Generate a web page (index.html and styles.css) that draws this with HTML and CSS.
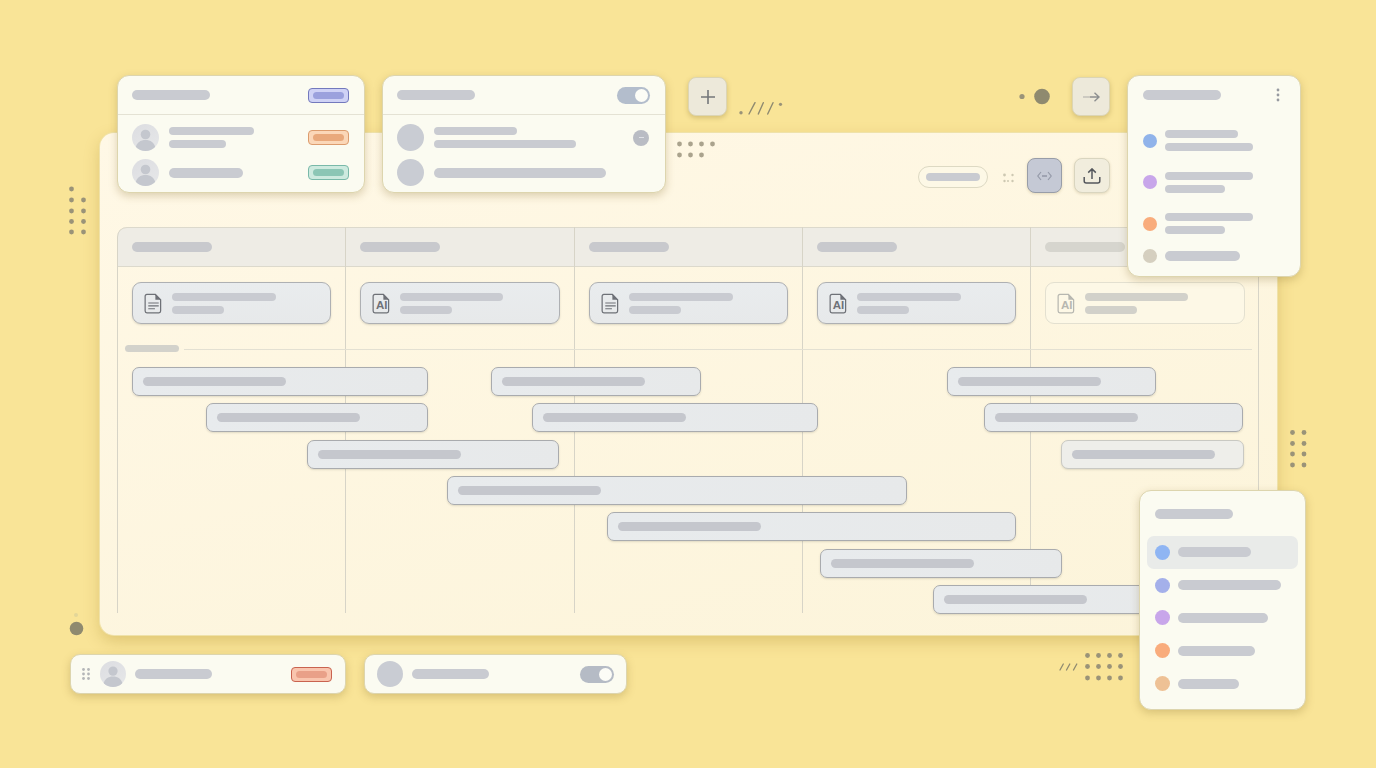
FILE: index.html
```html
<!DOCTYPE html>
<html lang="en">
<head>
    <meta charset="UTF-8">
    <meta name="viewport" content="width=device-width, initial-scale=1.0">
    <title>Schedule board</title>
    <link rel="stylesheet" href="styles.css">
</head>
<body>
    <svg width="0" height="0" class="defs">
        <symbol id="person" viewBox="0 0 27 27">
            <circle cx="13.5" cy="10.5" r="4.8" fill="#c4c7ce"/>
            <path d="M3.5 24c1.2-5.6 5-8 10-8s8.800 2.400 10 8a13.500 13.500 0 0 1-20 0z" fill="#c4c7ce"/>
        </symbol>
        <symbol id="doc" viewBox="0 0 20 22">
            <path d="M3 1.500h9l5.500 5.500v12a1.800 1.800 0 0 1-1.800 1.800H3a1.800 1.800 0 0 1-1.800-1.800V3.300A1.800 1.800 0 0 1 3 1.500z" fill="none" stroke="currentColor" stroke-width="1.300"/>
            <path d="M12 1.500v5.500h5.500z" fill="currentColor"/>
            <path d="M4.500 10.500h11M4.500 13.500h11M4.500 16.500h7" fill="none" stroke="currentColor" stroke-width="1.200"/>
        </symbol>
        <symbol id="doc-blank" viewBox="0 0 20 22">
            <path d="M3 1.500h9l5.500 5.500v12a1.800 1.800 0 0 1-1.800 1.800H3a1.800 1.800 0 0 1-1.800-1.800V3.300A1.800 1.800 0 0 1 3 1.500z" fill="none" stroke="currentColor" stroke-width="1.300"/>
            <path d="M12 1.500v5.500h5.500z" fill="currentColor"/>
        </symbol>
    </svg>

    <div class="stage">
        <!-- main board -->
        <div class="board">
            <div class="toolbar">
                <div class="pill"><span class="bar" style="width:54px"></span></div>
                <svg class="tool-dots" width="11" height="10" viewBox="0 0 11 10">
                    <circle cx="1.500" cy="2" r="1.400"/><circle cx="9.500" cy="2" r="1.200"/>
                    <circle cx="1.500" cy="8" r="1.200"/><circle cx="5" cy="8" r="1"/><circle cx="9.500" cy="8" r="1.200"/>
                </svg>
                <button class="tool-btn tool-btn-active">
                    <svg width="15" height="10" viewBox="0 0 15 10" fill="none" stroke="#959aa9" stroke-width="1.200">
                        <path d="M4 1 .8 5 4 9M11 1l3.200 4L11 9"/>
                        <path d="M5 5h5" stroke-width="1.600"/>
                    </svg>
                </button>
                <button class="tool-btn">
                    <svg width="18" height="16" viewBox="0 0 18 16" fill="none" stroke="#54575c" stroke-width="1.500">
                        <path d="M9 11V1M5.200 4.600 9 .9l3.800 3.700"/>
                        <path d="M1.200 9v4a2 2 0 0 0 2 2h11.600a2 2 0 0 0 2-2V9"/>
                    </svg>
                </button>
            </div>

            <div class="table">
                <div class="thead">
                    <div class="th"><span class="bar bar-head"></span></div>
                    <div class="th"><span class="bar bar-head"></span></div>
                    <div class="th"><span class="bar bar-head"></span></div>
                    <div class="th"><span class="bar bar-head"></span></div>
                    <div class="th"><span class="bar bar-head bar-faint"></span></div>
                </div>
                <div class="col-lines"><i></i><i></i><i></i><i></i><i></i></div>

                <div class="docs">
                    <div class="doc">
                        <span class="doc-icon"><svg width="19" height="21"><use href="#doc"/></svg></span>
                        <div class="stack"><span class="bar" style="width:104px"></span><span class="bar" style="width:52px"></span></div>
                    </div>
                    <div class="doc">
                        <span class="doc-icon"><svg width="19" height="21"><use href="#doc-blank"/></svg><b>AI</b></span>
                        <div class="stack"><span class="bar" style="width:103px"></span><span class="bar" style="width:52px"></span></div>
                    </div>
                    <div class="doc">
                        <span class="doc-icon"><svg width="19" height="21"><use href="#doc"/></svg></span>
                        <div class="stack"><span class="bar" style="width:104px"></span><span class="bar" style="width:52px"></span></div>
                    </div>
                    <div class="doc">
                        <span class="doc-icon"><svg width="19" height="21"><use href="#doc-blank"/></svg><b>AI</b></span>
                        <div class="stack"><span class="bar" style="width:104px"></span><span class="bar" style="width:52px"></span></div>
                    </div>
                    <div class="doc doc-faint">
                        <span class="doc-icon"><svg width="19" height="21"><use href="#doc-blank"/></svg><b>AI</b></span>
                        <div class="stack"><span class="bar" style="width:103px"></span><span class="bar" style="width:52px"></span></div>
                    </div>
                </div>

                <div class="divider"><span class="divider-label"></span><span class="divider-line"></span></div>

                <div class="gantt">
                    <div class="gantt-row">
                        <div class="task" style="margin-left:15px;width:296px"><span class="bar bar-task"></span></div>
                        <div class="task" style="margin-left:63px;width:210px"><span class="bar bar-task"></span></div>
                        <div class="task" style="margin-left:246px;width:209px"><span class="bar bar-task"></span></div>
                    </div>
                    <div class="gantt-row">
                        <div class="task" style="margin-left:89px;width:222px"><span class="bar bar-task"></span></div>
                        <div class="task" style="margin-left:104px;width:286px"><span class="bar bar-task"></span></div>
                        <div class="task" style="margin-left:166px;width:259px"><span class="bar bar-task"></span></div>
                    </div>
                    <div class="gantt-row">
                        <div class="task" style="margin-left:190px;width:252px"><span class="bar bar-task"></span></div>
                        <div class="task task-faint" style="margin-left:502px;width:183px"><span class="bar bar-task"></span></div>
                    </div>
                    <div class="gantt-row">
                        <div class="task" style="margin-left:330px;width:460px"><span class="bar bar-task"></span></div>
                    </div>
                    <div class="gantt-row">
                        <div class="task" style="margin-left:490px;width:409px"><span class="bar bar-task"></span></div>
                    </div>
                    <div class="gantt-row">
                        <div class="task" style="margin-left:703px;width:242px"><span class="bar bar-task"></span></div>
                    </div>
                    <div class="gantt-row">
                        <div class="task" style="margin-left:816px;width:280px"><span class="bar bar-task"></span></div>
                    </div>
                </div>
            </div>
        </div>

        <!-- scattered dots and dashes -->
        <svg class="decor" width="1376" height="768" viewBox="0 0 1376 768">
            <g fill="#9a9378">
                <circle cx="71.500" cy="189" r="2.400"/>
                <circle cx="71.500" cy="200" r="2.400"/><circle cx="83.500" cy="200" r="2.400"/>
                <circle cx="71.500" cy="211" r="2.400"/><circle cx="83.500" cy="211" r="2.400"/>
                <circle cx="71.500" cy="221.500" r="2.400"/><circle cx="83.500" cy="221.500" r="2.400"/>
                <circle cx="71.500" cy="232" r="2.400"/><circle cx="83.500" cy="232" r="2.400"/>

                <circle cx="1292.500" cy="432.500" r="2.400"/><circle cx="1304" cy="432.500" r="2.400"/>
                <circle cx="1292.500" cy="443.500" r="2.400"/><circle cx="1304" cy="443.500" r="2.400"/>
                <circle cx="1292.500" cy="454" r="2.400"/><circle cx="1304" cy="454" r="2.400"/>
                <circle cx="1292.500" cy="465" r="2.400"/><circle cx="1304" cy="465" r="2.400"/>

                <circle cx="1087.500" cy="655.500" r="2.400"/><circle cx="1098.500" cy="655.500" r="2.400"/><circle cx="1109.500" cy="655.500" r="2.400"/><circle cx="1120.500" cy="655.500" r="2.400"/>
                <circle cx="1087.500" cy="666.500" r="2.400"/><circle cx="1098.500" cy="666.500" r="2.400"/><circle cx="1109.500" cy="666.500" r="2.400"/><circle cx="1120.500" cy="666.500" r="2.400"/>
                <circle cx="1087.500" cy="678" r="2.400"/><circle cx="1098.500" cy="678" r="2.400"/><circle cx="1109.500" cy="678" r="2.400"/><circle cx="1120.500" cy="678" r="2.400"/>

                <circle cx="741" cy="112.800" r="1.700"/>
                <circle cx="780.500" cy="104.300" r="1.600"/>
                <circle cx="1022" cy="96.500" r="2.600"/>
            </g>
            <g fill="#aaa38d">
                <circle cx="679.500" cy="144" r="2.400"/><circle cx="690.500" cy="144" r="2.400"/><circle cx="701.500" cy="144" r="2.400"/><circle cx="712.500" cy="144" r="2.400"/>
                <circle cx="679.500" cy="155" r="2.400"/><circle cx="690.500" cy="155" r="2.400"/><circle cx="701.500" cy="155" r="2.400"/>
            </g>
            <circle cx="1042" cy="96.500" r="7.800" fill="#8f8a6f"/>
            <circle cx="76.500" cy="628.500" r="6.800" fill="#8f8a6f"/>
            <circle cx="76" cy="615" r="2" fill="#e3d699"/>
            <path d="M749 114l6-11.300M758.300 114l5-11.300M767.700 114l5.300-11.300" fill="none" stroke="#8f8a70" stroke-width="1.400" stroke-linecap="round"/>
            <path d="M1060 670l3.300-6M1066.500 670l3.300-6M1073.500 670l3.300-6" fill="none" stroke="#8f8a70" stroke-width="1.300" stroke-linecap="round"/>
        </svg>

        <!-- floating cards, top row -->
        <div class="card card-people">
            <div class="card-head">
                <span class="bar bar-title"></span>
                <span class="tag tag-purple"><i></i></span>
            </div>
            <div class="card-body">
                <div class="person">
                    <div class="avatar"><svg width="27" height="27"><use href="#person"/></svg></div>
                    <div class="stack"><span class="bar" style="width:85px"></span><span class="bar" style="width:57px"></span></div>
                    <span class="tag tag-orange"><i></i></span>
                </div>
                <div class="person">
                    <div class="avatar"><svg width="27" height="27"><use href="#person"/></svg></div>
                    <span class="bar bar-lg" style="width:74px"></span>
                    <span class="tag tag-teal"><i></i></span>
                </div>
            </div>
        </div>

        <div class="card card-toggle">
            <div class="card-head">
                <span class="bar bar-title"></span>
                <span class="toggle"><i></i></span>
            </div>
            <div class="card-body">
                <div class="person">
                    <div class="avatar avatar-plain"></div>
                    <div class="stack"><span class="bar" style="width:83px"></span><span class="bar" style="width:142px"></span></div>
                    <span class="mini-badge"><i></i></span>
                </div>
                <div class="person">
                    <div class="avatar avatar-plain"></div>
                    <span class="bar bar-lg" style="width:172px"></span>
                </div>
            </div>
        </div>

        <button class="float-btn btn-plus">
            <svg width="14" height="14" viewBox="0 0 14 14" fill="none" stroke="#74777a" stroke-width="1.600"><path d="M7 0v14M0 7h14"/></svg>
        </button>
        <button class="float-btn btn-arrow">
            <svg width="18" height="10" viewBox="0 0 18 10" fill="none" stroke="#8d8f90" stroke-width="1.400">
                <path d="M8 5h9M12.500.7 17 5l-4.500 4.300"/>
                <path d="M1 5h7" stroke="#bfbeb6"/>
            </svg>
        </button>

        <div class="card card-legend">
            <div class="legend-head">
                <span class="bar bar-title"></span>
                <svg width="4" height="14" viewBox="0 0 4 14" fill="#979aa1"><circle cx="2" cy="2" r="1.400"/><circle cx="2" cy="7" r="1.400"/><circle cx="2" cy="12" r="1.400"/></svg>
            </div>
            <div class="legend-list">
                <div class="legend-row">
                    <span class="dot dot-blue"></span>
                    <div class="stack"><span class="bar" style="width:73px"></span><span class="bar" style="width:88px"></span></div>
                </div>
                <div class="legend-row">
                    <span class="dot dot-purple"></span>
                    <div class="stack"><span class="bar" style="width:88px"></span><span class="bar" style="width:60px"></span></div>
                </div>
                <div class="legend-row">
                    <span class="dot dot-orange"></span>
                    <div class="stack"><span class="bar" style="width:88px"></span><span class="bar" style="width:60px"></span></div>
                </div>
                <div class="legend-row legend-row-single">
                    <span class="dot dot-beige"></span>
                    <span class="bar bar-lg" style="width:75px"></span>
                </div>
            </div>
        </div>

        <!-- bottom right menu -->
        <div class="card card-menu">
            <div class="menu-head"><span class="bar bar-title"></span></div>
            <div class="menu-list">
                <div class="menu-row menu-row-active"><span class="dot dot-blue2"></span><span class="bar bar-lg" style="width:73px"></span></div>
                <div class="menu-row"><span class="dot dot-periwinkle"></span><span class="bar bar-lg" style="width:103px"></span></div>
                <div class="menu-row"><span class="dot dot-purple"></span><span class="bar bar-lg" style="width:90px"></span></div>
                <div class="menu-row"><span class="dot dot-orange"></span><span class="bar bar-lg" style="width:77px"></span></div>
                <div class="menu-row"><span class="dot dot-sand"></span><span class="bar bar-lg" style="width:61px"></span></div>
            </div>
        </div>

        <!-- bottom row -->
        <div class="card card-strip strip-left">
            <svg class="grip" width="8" height="12" viewBox="0 0 8 12" fill="#b4b6b8">
                <circle cx="1.500" cy="1.500" r="1.400"/><circle cx="6.500" cy="1.500" r="1.400"/>
                <circle cx="1.500" cy="6" r="1.400"/><circle cx="6.500" cy="6" r="1.400"/>
                <circle cx="1.500" cy="10.500" r="1.400"/><circle cx="6.500" cy="10.500" r="1.400"/>
            </svg>
            <div class="avatar avatar-sm"><svg width="26" height="26"><use href="#person"/></svg></div>
            <span class="bar bar-lg" style="width:77px"></span>
            <span class="tag tag-red"><i></i></span>
        </div>
        <div class="card card-strip strip-right">
            <div class="avatar avatar-sm avatar-plain"></div>
            <span class="bar bar-lg" style="width:77px"></span>
            <span class="toggle toggle-strip"><i></i></span>
        </div>
    </div>
</body>
</html>
```

FILE: styles.css
```css
* {
    box-sizing: border-box;
}
body {
    margin: 0;
    padding: 0;
    font-family: "Liberation Sans", Arial, sans-serif;
    background: #f9e598;
    overflow: hidden;
}
button {
    padding: 0;
    font: inherit;
}
.defs {
    position: absolute;
}
.stage {
    position: relative;
    width: 1376px;
    height: 768px;
    overflow: hidden;
    background: #f9e497;
}
.decor {
    position: absolute;
    top: 0;
    left: 0;
    pointer-events: none;
}

/* skeleton text */
.bar {
    display: block;
    flex-shrink: 0;
    height: 8px;
    border-radius: 4px;
    background: #c9cbd1;
}
.bar-lg {
    height: 10px;
    border-radius: 5px;
}
.bar-title {
    width: 78px;
    height: 10px;
    border-radius: 5px;
}
.bar-head {
    width: 80px;
    height: 10px;
    border-radius: 5px;
    background: #c8c9cd;
}
.bar-faint {
    background: #d6d5ce;
}
.bar-task {
    width: 143px;
    height: 9px;
    border-radius: 4.500px;
    background: #c5c7cd;
}
.stack {
    display: flex;
    flex-direction: column;
    gap: 5px;
}

/* board */
.board {
    position: absolute;
    left: 100px;
    top: 133px;
    width: 1177px;
    height: 502px;
    padding: 0 18.500px 0 17px;
    border-radius: 14px;
    background: linear-gradient(165deg, #fff8e6, #fcf4da);
    box-shadow: 0 0 0 1px #efe2aa, 0 6px 16px rgba(165, 130, 40, 0.32);
}
.toolbar {
    display: flex;
    justify-content: flex-end;
    align-items: flex-start;
    height: 94px;
    padding: 25px 148.500px 0 0;
}
.pill {
    display: flex;
    align-items: center;
    justify-content: center;
    width: 70px;
    height: 22px;
    margin-top: 8px;
    margin-right: 15px;
    border: 1px solid #ddd9c3;
    border-radius: 11px;
    background: #fdf8e6;
}
.tool-dots {
    margin-top: 15px;
    margin-right: 13px;
    fill: #cdc8b2;
}
.tool-btn {
    display: flex;
    align-items: center;
    justify-content: center;
    width: 36px;
    height: 35px;
    margin-left: 12px;
    border: 1px solid #d9d5bf;
    border-radius: 8px;
    background: #f1eddd;
    box-shadow: 0 1px 3px rgba(120, 100, 40, 0.2);
}
.tool-btn-active {
    width: 35px;
    margin-left: 0;
    border-color: #989da8;
    background: #c5c9d5;
}

/* table */
.table {
    position: relative;
}
.thead {
    display: grid;
    grid-template-columns: repeat(5, 1fr);
    height: 40px;
    border-top: 1px solid #dcd9cc;
    border-bottom: 1px solid #dcd9cc;
    border-radius: 10px 10px 0 0;
    background: #eeece5;
}
.th {
    display: flex;
    align-items: center;
    padding-left: 15px;
}
.col-lines {
    position: absolute;
    top: 0;
    left: 0;
    right: 0;
    bottom: 1px;
    display: grid;
    grid-template-columns: repeat(5, 1fr);
}
.col-lines i {
    border-left: 1px solid #d7d4c7;
}
.col-lines i:first-child {
    border-top-left-radius: 10px;
}
.col-lines i:last-child {
    border-right: 1px solid #d7d4c7;
}
.docs {
    position: relative;
    display: grid;
    grid-template-columns: repeat(5, 1fr);
    padding-top: 15px;
}
.doc {
    display: flex;
    align-items: center;
    gap: 9px;
    height: 42px;
    margin: 0 14px 0 15px;
    padding-left: 11px;
    border: 1px solid #aeb0b3;
    border-radius: 9px;
    background: linear-gradient(#e9ecee, #e7e9ea);
    box-shadow: 0 1px 2px rgba(90, 90, 70, 0.2);
    color: #6e7177;
}
.doc-icon {
    position: relative;
    display: block;
    width: 19px;
    height: 21px;
    flex-shrink: 0;
}
.doc-icon svg {
    display: block;
}
.doc-icon b {
    position: absolute;
    top: 7px;
    left: 0;
    right: 0;
    font-size: 11.500px;
    line-height: 11.500px;
    text-align: center;
}
.doc-faint {
    border-color: #e3e0d0;
    background: #fdf8e6;
    box-shadow: none;
    color: #b7b7b0;
}
.doc-faint .bar {
    background: #d2d1ca;
}
.divider {
    position: relative;
    display: flex;
    align-items: center;
    gap: 5px;
    height: 7px;
    margin-top: 21px;
    padding: 0 7px 0 8px;
}
.divider-label {
    flex-shrink: 0;
    width: 54px;
    height: 7px;
    border-radius: 3.500px;
    background: #d3d2cb;
}
.divider-line {
    flex: 1;
    height: 1px;
    margin-top: 1px;
    background: #e3e0d2;
}
.gantt {
    position: relative;
    display: flex;
    flex-direction: column;
    gap: 7.330px;
    margin-top: 15px;
}
.gantt-row {
    display: flex;
    height: 29px;
}
.task {
    display: flex;
    align-items: center;
    flex-shrink: 0;
    padding-left: 10px;
    border: 1px solid #a9abae;
    border-radius: 7px;
    background: linear-gradient(100deg, #e8ebed, #e7e9ea);
    box-shadow: 0 1px 2px rgba(90, 90, 70, 0.18);
}
.task-faint {
    border-color: #c9c9c3;
    background: #eeeeea;
}

/* floating cards */
.card {
    position: absolute;
    border: 1px solid #ddd5ae;
    border-radius: 12px;
    background: #fbfbf1;
    box-shadow: 0 3px 9px rgba(130, 105, 40, 0.28);
}
.card-people {
    left: 117px;
    top: 75px;
    width: 248px;
    height: 118px;
}
.card-toggle {
    left: 382px;
    top: 75px;
    width: 284px;
    height: 118px;
}
.card-head {
    display: flex;
    align-items: center;
    justify-content: space-between;
    height: 39px;
    padding: 0 15px 0 14px;
    border-bottom: 1px solid #e4e2d4;
}
.card-body {
    display: flex;
    flex-direction: column;
    gap: 8px;
    padding: 9px 15px 0 14px;
}
.person {
    display: flex;
    align-items: center;
    gap: 10px;
    height: 27px;
}
.person .tag,
.person .mini-badge {
    margin-left: auto;
}
.avatar {
    flex-shrink: 0;
    width: 27px;
    height: 27px;
    border-radius: 50%;
    overflow: hidden;
    background: linear-gradient(150deg, #dcdde1, #e7e8e9);
}
.avatar svg {
    display: block;
}
.avatar-plain {
    background: #c9ccd3;
}
.avatar-sm {
    width: 26px;
    height: 26px;
}
.tag {
    display: flex;
    align-items: center;
    justify-content: center;
    flex-shrink: 0;
    width: 41px;
    height: 15px;
    border: 1px solid;
    border-radius: 4px;
}
.tag i {
    width: 31px;
    height: 7px;
    border-radius: 3.500px;
}
.tag-purple {
    border-color: #7379bd;
    background: #cfd2f5;
}
.tag-purple i {
    background: #9ba1dd;
}
.tag-orange {
    border-color: #dc9c6e;
    background: #fbd7b8;
}
.tag-orange i {
    background: #e9a97c;
}
.tag-teal {
    border-color: #79b9a9;
    background: #cdeadf;
}
.tag-teal i {
    background: #8bc6b5;
}
.tag-red {
    margin-left: auto;
    border-color: #c9634f;
    background: #f9c5ae;
}
.tag-red i {
    background: #e9a088;
}
.toggle {
    display: flex;
    justify-content: flex-end;
    align-items: center;
    width: 33px;
    height: 17px;
    padding: 0 2px;
    border-radius: 8.500px;
    background: #b3bdcc;
}
.toggle i {
    width: 13px;
    height: 13px;
    border-radius: 50%;
    background: #fcfcf6;
}
.toggle-strip {
    width: 34px;
    margin-left: auto;
    background: #b5bbc5;
}
.mini-badge {
    display: flex;
    align-items: center;
    justify-content: center;
    width: 16px;
    height: 16px;
    margin-right: 1px;
    border-radius: 50%;
    background: #b9bcc4;
}
.mini-badge i {
    width: 5px;
    height: 1.500px;
    background: #dfe1e6;
}
.float-btn {
    position: absolute;
    top: 77px;
    display: flex;
    align-items: center;
    justify-content: center;
    width: 39px;
    height: 39px;
    border: 1px solid #dcd5b4;
    border-radius: 8px;
    background: #ede9da;
    box-shadow: 0 2px 5px rgba(130, 105, 40, 0.3);
}
.btn-plus {
    left: 688px;
}
.btn-arrow {
    left: 1072px;
    width: 38px;
}

/* legend card */
.card-legend {
    left: 1127px;
    top: 75px;
    width: 174px;
    height: 202px;
    z-index: 2;
}
.legend-head {
    display: flex;
    align-items: center;
    justify-content: space-between;
    height: 38px;
    padding: 0 20px 0 15px;
}
.legend-list {
    display: flex;
    flex-direction: column;
    gap: 20.500px;
    padding: 16px 0 0 15px;
}
.legend-row {
    display: flex;
    align-items: center;
    gap: 8px;
    height: 21px;
}
.legend-row-single {
    height: 10px;
    margin-top: -4px;
}
.dot {
    flex-shrink: 0;
    width: 14px;
    height: 14px;
    border-radius: 50%;
}
.dot-blue {
    background: #90b3ea;
}
.dot-blue2 {
    background: #8fb5f3;
}
.dot-periwinkle {
    background: #a4b0ea;
}
.dot-purple {
    background: #c8a6ea;
}
.dot-orange {
    background: #f9ac7c;
}
.dot-beige {
    background: #d5cfbf;
}
.dot-sand {
    background: #eec195;
}

/* menu card */
.card-menu {
    left: 1139px;
    top: 490px;
    width: 167px;
    height: 220px;
    z-index: 2;
}
.menu-head {
    display: flex;
    align-items: center;
    height: 45px;
    padding: 0 0 0 15px;
}
.menu-list {
    display: flex;
    flex-direction: column;
    padding: 0 7px;
}
.menu-row {
    display: flex;
    align-items: center;
    gap: 8px;
    height: 32.800px;
    padding-left: 8px;
}
.menu-row .dot {
    width: 15px;
    height: 15px;
}
.menu-row-active {
    border-radius: 7px;
    background: #e9ebe9;
}

/* bottom strip */
.card-strip {
    top: 654px;
    display: flex;
    align-items: center;
    height: 40px;
    border-radius: 10px;
}
.strip-left {
    left: 70px;
    width: 276px;
    padding: 0 13px 0 11px;
}
.strip-left .avatar {
    margin-left: 10px;
    margin-right: 9px;
}
.strip-right {
    left: 364px;
    width: 263px;
    padding: 0 12px 0 12px;
}
.strip-right .avatar {
    margin-right: 9px;
}
```
